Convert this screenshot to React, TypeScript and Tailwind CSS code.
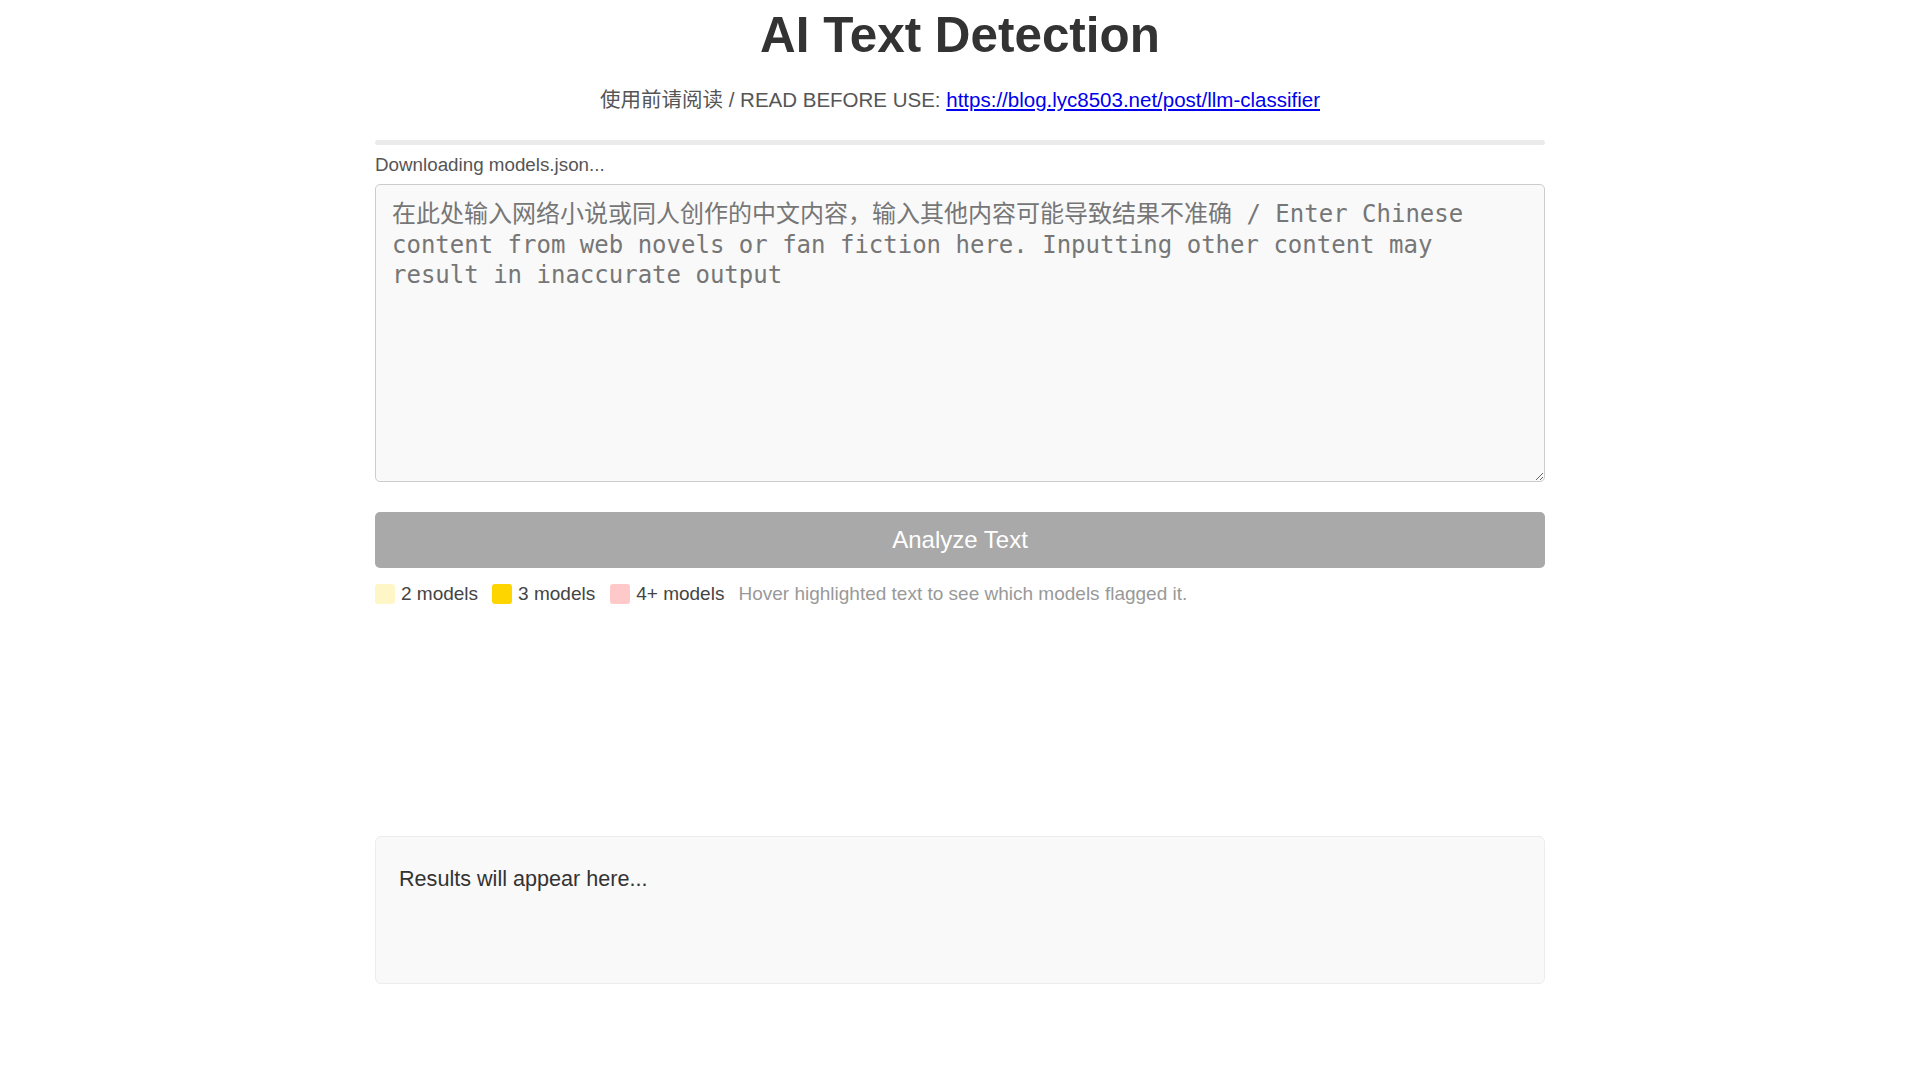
export default function App() {
  return (
    <div className="min-h-screen bg-white font-['Liberation_Sans',Arial,sans-serif]">
      <div className="w-[1170px] mx-auto">
        {/* header */}
        <h1 className="mt-[11px] text-center text-[49.4px] leading-[48px] font-bold text-[#333]">
          AI Text Detection
        </h1>
        <p className="mt-[27px] text-center text-[20.5px] leading-[28px] text-[#555] font-['Liberation_Sans','Noto_Sans_CJK_SC',sans-serif]">
          使用前请阅读 / READ BEFORE USE:{' '}
          <a href="#" className="text-[#0000ee] underline">
            https://blog.lyc8503.net/post/llm-classifier
          </a>
        </p>

        {/* progress */}
        <div className="mt-[26px] h-[5px] w-full rounded-full bg-[#ebebeb]" />
        <div className="mt-[8px] text-[18.8px] leading-[24px] text-[#555]">
          Downloading models.json...
        </div>

        {/* input */}
        <textarea
          className="mt-[7px] block w-full h-[298px] rounded-[5px] border border-[#cccccc] bg-[#f9f9f9] px-[16px] py-[14px] text-[24px] leading-[30.5px] text-[#333] placeholder:text-[#767676] font-['DejaVu_Sans_Mono','Noto_Sans_CJK_SC',monospace] outline-none"
          placeholder="在此处输入网络小说或同人创作的中文内容，输入其他内容可能导致结果不准确 / Enter Chinese content from web novels or fan fiction here. Inputting other content may result in inaccurate output"
        />

        <button className="mt-[30px] block w-full h-[56px] rounded-[5px] bg-[#a9a9a9] text-[24px] text-white">
          Analyze Text
        </button>

        {/* legend */}
        <div className="mt-[16px] flex items-center h-[20px] text-[19px] leading-[20px] text-[#444]">
          <div className="flex items-center gap-[6px] mr-[14px]">
            <span className="w-[20px] h-[20px] rounded-[3px] bg-[#fff6c8]" />
            <span>2 models</span>
          </div>
          <div className="flex items-center gap-[6px] mr-[15px]">
            <span className="w-[20px] h-[20px] rounded-[3px] bg-[#ffd500]" />
            <span>3 models</span>
          </div>
          <div className="flex items-center gap-[6px] mr-[14px]">
            <span className="w-[20px] h-[20px] rounded-[3px] bg-[#ffc9c9]" />
            <span>4+ models</span>
          </div>
          <span className="text-[#999]">Hover highlighted text to see which models flagged it.</span>
        </div>

        {/* results */}
        <div className="mt-[232px] h-[148px] rounded-[6px] border border-[#ececec] bg-[#f9f9f9] px-[23px] pt-[27px] text-[21.6px] leading-[30px] text-[#333]">
          Results will appear here...
        </div>
      </div>
    </div>
  )
}
